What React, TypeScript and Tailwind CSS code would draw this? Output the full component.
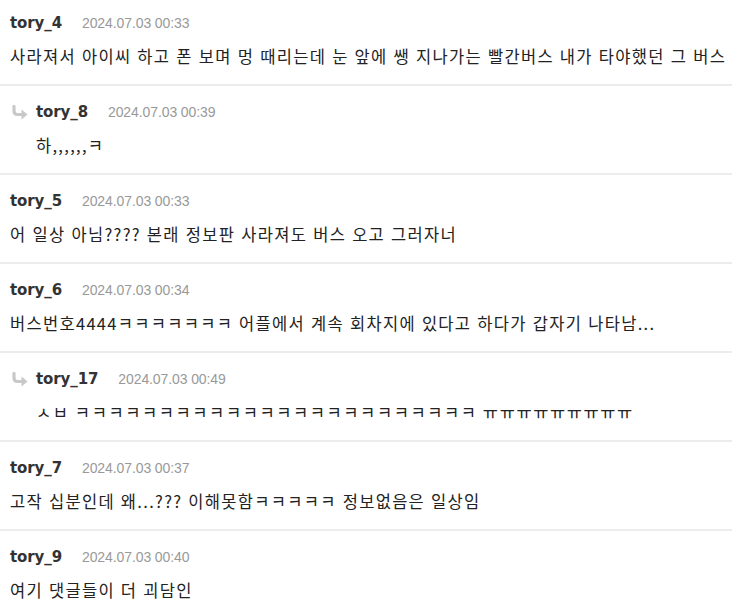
import * as React from "react";

type Comment = {
  id: number;
  name: string;
  date: string;
  body: string;
  reply?: boolean;
  wide?: boolean;
};

const comments: Comment[] = [
  {
    id: 1,
    name: "tory_4",
    date: "2024.07.03 00:33",
    body: "사라져서 아이씨 하고 폰 보며 멍 때리는데 눈 앞에 쌩 지나가는 빨간버스 내가 타야했던 그 버스",
  },
  { id: 2, name: "tory_8", date: "2024.07.03 00:39", body: "하,,,,,,ㅋ", reply: true },
  {
    id: 3,
    name: "tory_5",
    date: "2024.07.03 00:33",
    body: "어 일상 아님???? 본래 정보판 사라져도 버스 오고 그러자너",
  },
  {
    id: 4,
    name: "tory_6",
    date: "2024.07.03 00:34",
    body: "버스번호4444ㅋㅋㅋㅋㅋㅋㅋ 어플에서 계속 회차지에 있다고 하다가 갑자기 나타남...",
  },
  {
    id: 5,
    name: "tory_17",
    date: "2024.07.03 00:49",
    body: "ㅅㅂ ㅋㅋㅋㅋㅋㅋㅋㅋㅋㅋㅋㅋㅋㅋㅋㅋㅋㅋㅋㅋㅋㅋㅋㅋ ㅠㅠㅠㅠㅠㅠㅠㅠㅠ",
    reply: true,
    wide: true,
  },
  {
    id: 6,
    name: "tory_7",
    date: "2024.07.03 00:37",
    body: "고작 십분인데 왜...??? 이해못함ㅋㅋㅋㅋㅋ 정보없음은 일상임",
  },
  { id: 7, name: "tory_9", date: "2024.07.03 00:40", body: "여기 댓글들이 더 괴담인" },
];

function ReplyArrow() {
  return (
    <svg width="18" height="15" viewBox="0 0 18 15" className="shrink-0">
      <path
        d="M3 1.5 V6 Q3 9.5 6.5 9.5 H11.5"
        fill="none"
        stroke="#c8c8c8"
        strokeWidth="3.2"
        strokeLinecap="round"
      />
      <path d="M10.5 4.5 L16.5 9.5 L10.5 14.5 Z" fill="#c8c8c8" />
    </svg>
  );
}

function CommentRow({ c, first }: { c: Comment; first: boolean }) {
  return (
    <div
      className={
        (first ? "pt-[13px]" : "pt-[16px] border-t-2 border-[#ececec]") +
        " pb-[17px] " +
        (c.reply ? "pl-[11px]" : "pl-[10px]")
      }
    >
      <div className="flex items-center h-[20px]">
        {c.reply && (
          <div className="w-[25px] flex items-center">
            <ReplyArrow />
          </div>
        )}
        <span className="font-['DejaVu_Sans',sans-serif] font-bold text-[15px] text-[#333] tracking-[-0.1px]">
          {c.name}
        </span>
        <span className="ml-[20px] font-['Liberation_Sans',Arial,sans-serif] text-[14px] tracking-[-0.1px] text-[#999]">
          {c.date}
        </span>
      </div>
      <div
        className={
          "mt-[12px] h-[22px] leading-[22px] whitespace-nowrap font-['Noto_Sans_CJK_KR',sans-serif] text-[16.5px] text-[#222] " +
          (c.reply ? "pl-[25px] " : "") +
          (c.wide ? "tracking-[1.6px]" : "tracking-[1.3px] [word-spacing:1px]")
        }
      >
        {c.body}
      </div>
    </div>
  );
}

export default function App() {
  return (
    <div className="w-[732px] h-[607px] overflow-hidden bg-white">
      {comments.map((c, i) => (
        <CommentRow key={c.id} c={c} first={i === 0} />
      ))}
    </div>
  );
}
